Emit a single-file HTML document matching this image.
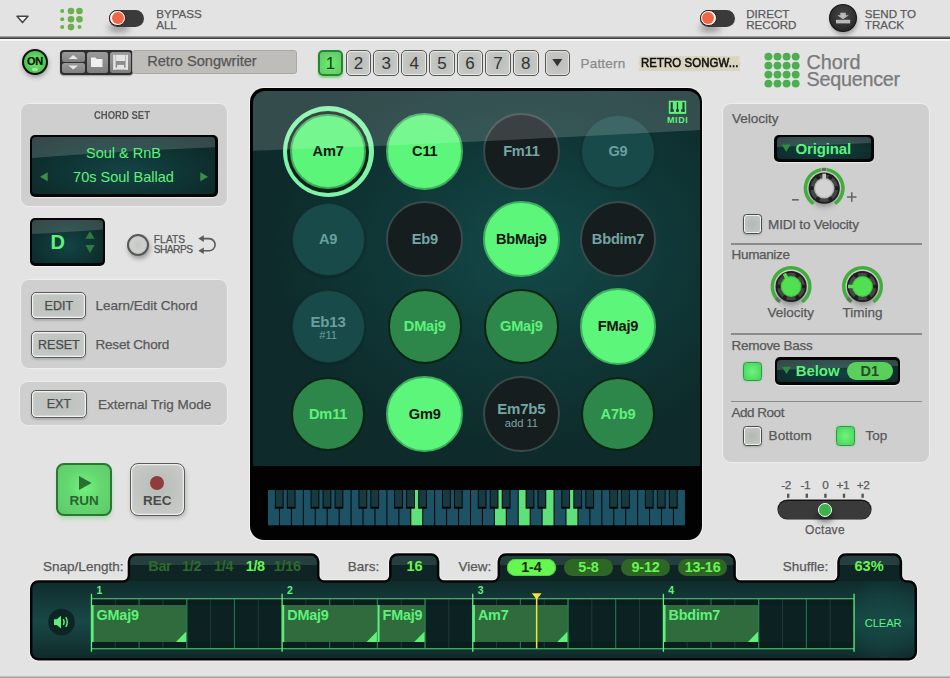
<!DOCTYPE html><html><head><meta charset="utf-8"><style>
*{margin:0;padding:0;box-sizing:border-box}
html,body{width:950px;height:678px;overflow:hidden;background:#e3e3e3;font-family:"Liberation Sans",sans-serif}
.a{position:absolute}
.t{position:absolute;line-height:1;white-space:nowrap}
.g{-webkit-text-stroke:.25px currentColor}
svg{position:absolute;left:0;top:0;overflow:visible}
</style></head><body>
<div class="a" style="left:0;top:36px;width:950px;height:3.1px;background:linear-gradient(#c4c4c4,#6a6a6a 45%,#444 80%,#4a4a4a)"></div>
<div class="a" style="left:0;top:39.1px;width:950px;height:2.2px;background:#f5f5f5"></div>
<svg width="950" height="678" viewBox="0 0 950 678"><path d="M17 16.3 L28 16.3 L22.5 22.6 Z" fill="#f4f4f4" stroke="#444" stroke-width="1.5" stroke-linejoin="round"/><circle cx="62.2" cy="11" r="2" fill="#6bb04c"/><circle cx="71" cy="11" r="3.3" fill="#6bb04c"/><circle cx="79.5" cy="11" r="3.3" fill="#6bb04c"/><circle cx="62.2" cy="19.2" r="2" fill="#6bb04c"/><circle cx="71" cy="19.2" r="3.3" fill="#6bb04c"/><circle cx="79.5" cy="19.2" r="3.3" fill="#6bb04c"/><circle cx="62.2" cy="27.1" r="2" fill="#6bb04c"/><circle cx="71" cy="27.1" r="3.3" fill="#6bb04c"/><circle cx="79.5" cy="27.1" r="2" fill="#6bb04c"/></svg>
<div class="a" style="left:108px;top:24px;width:22px;height:8px;border-radius:50%;background:rgba(0,0,0,.35);filter:blur(3px)"></div><div class="a" style="left:109px;top:9.5px;width:35px;height:17.5px;border-radius:9px;background:#3a3a3a"></div><div class="a" style="left:109.4px;top:9.7px;width:16.6px;height:16.6px;border-radius:50%;background:#fff;border:1.3px solid #3a1a10"></div><div class="a" style="left:111.7px;top:12px;width:12px;height:12px;border-radius:50%;background:#f26645"></div>
<div class="t g" style="left:156.20px;top:8.09px;font-size:11.6px;color:#5a5a5a;font-weight:normal;letter-spacing:0px">BYPASS</div>
<div class="t g" style="left:156.20px;top:19.09px;font-size:11.6px;color:#5a5a5a;font-weight:normal;letter-spacing:0px">ALL</div>
<div class="a" style="left:699px;top:24px;width:22px;height:8px;border-radius:50%;background:rgba(0,0,0,.35);filter:blur(3px)"></div><div class="a" style="left:700px;top:9.5px;width:35px;height:17.5px;border-radius:9px;background:#3a3a3a"></div><div class="a" style="left:700.0px;top:9.7px;width:16.6px;height:16.6px;border-radius:50%;background:#fff;border:1.3px solid #3a1a10"></div><div class="a" style="left:702.3px;top:12px;width:12px;height:12px;border-radius:50%;background:#f26645"></div>
<div class="t g" style="left:746.20px;top:8.09px;font-size:11.6px;color:#5a5a5a;font-weight:normal;letter-spacing:0px">DIRECT</div>
<div class="t g" style="left:746.20px;top:19.09px;font-size:11.6px;color:#5a5a5a;font-weight:normal;letter-spacing:0px">RECORD</div>
<div class="a" style="left:831px;top:9px;width:26px;height:26px;border-radius:50%;background:rgba(0,0,0,.3);filter:blur(2px)"></div>
<div class="a" style="left:829px;top:4.3px;width:28.2px;height:27.5px;border-radius:50%;background:radial-gradient(circle at 50% 40%,#4a4a4a,#2a2a2a 70%);border:1.6px solid #141414"></div>
<svg width="950" height="678"><path d="M840.3 12.8 H845.8 V15.2 H848.8 L843 19.2 L837.3 15.2 H840.3 Z" fill="#b9b9b9"/><rect x="836" y="19.8" width="14.2" height="3.6" fill="#b9b9b9"/></svg>
<div class="t g" style="left:864.80px;top:8.09px;font-size:11.6px;color:#5a5a5a;font-weight:normal;letter-spacing:0px">SEND TO</div>
<div class="t g" style="left:864.80px;top:19.09px;font-size:11.6px;color:#5a5a5a;font-weight:normal;letter-spacing:0px">TRACK</div>
<div class="a" style="left:23px;top:52px;width:25px;height:25px;border-radius:50%;background:rgba(0,0,0,.35);filter:blur(2.5px)"></div>
<div class="a" style="left:21.9px;top:48.5px;width:26.3px;height:26.2px;border-radius:50%;background:radial-gradient(circle at 50% 50%,#6ae86a,#5cd45c 45%,#4fc04f 70%,#5ccc5c);border:2.2px solid #101010"></div>
<div class="t" style="left:-115.00px;top:56.46px;width:300px;text-align:center;font-size:11px;color:#0c0c0c;font-weight:bold;letter-spacing:-.2px;-webkit-text-stroke:.2px #0c0c0c">ON</div>
<div class="a" style="left:32px;top:67.6px;width:6px;height:3px;border-radius:3px;background:rgba(255,255,255,.45)"></div>
<div class="a" style="left:60px;top:50px;width:73px;height:24.5px;border-radius:4px;background:#2e2e2e;box-shadow:0 1px 1.5px rgba(0,0,0,.3)"></div>
<div class="a" style="left:61.5px;top:51.5px;width:23.5px;height:10px;border-radius:2.5px;background:linear-gradient(#9a9a9a,#808080)"></div>
<div class="a" style="left:61.5px;top:63px;width:23.5px;height:10px;border-radius:2.5px;background:linear-gradient(#9a9a9a,#808080)"></div>
<div class="a" style="left:86.5px;top:51.5px;width:21px;height:21.5px;border-radius:2.5px;background:linear-gradient(#9a9a9a,#808080)"></div>
<div class="a" style="left:109.5px;top:51.5px;width:21.5px;height:21.5px;border-radius:2.5px;background:linear-gradient(#9a9a9a,#808080)"></div>
<svg width="950" height="678"><path d="M68.5 59 L73.2 55 L78 59 Z" fill="#e8e8e8"/><path d="M68.5 65.5 L73.2 69.5 L78 65.5 Z" fill="#e8e8e8"/><path d="M91 57.5 H95.5 L96.8 59 H102.5 V67 H91 Z" fill="#f0f0f0"/><g fill="#e4e4e4"><rect x="113.2" y="54.8" width="2.4" height="14.8"/><rect x="125.6" y="54.8" width="2.4" height="14.8"/><rect x="116.1" y="54.8" width="9" height="6.2"/><rect x="113.2" y="67.6" width="14.8" height="2"/><rect x="117.1" y="64.9" width="7" height="4"/></g></svg>
<div class="a" style="left:132px;top:49.8px;width:165.3px;height:24.5px;border-radius:3px;background:#bebdba;border:1px solid #a9a8a5"></div>
<div class="t g" style="left:147.20px;top:54.39px;font-size:14.6px;color:#555;font-weight:normal;">Retro Songwriter</div>
<div class="a" style="left:317.6px;top:50px;width:25.8px;height:25.6px;border-radius:5px;background:radial-gradient(circle at 50% 55%,#68f86a 0,#62e466 30%,#6cc870 78%);border:2px solid #1f8a30;box-shadow:0 1.5px 2px rgba(60,200,60,.55)"></div>
<div class="t" style="left:180.50px;top:55.08px;width:300px;text-align:center;font-size:17px;color:#1e3a20;font-weight:normal;">1</div>
<div class="a" style="left:345.5px;top:50px;width:25.8px;height:25.6px;border-radius:5px;background:radial-gradient(circle at 50% 50%,#b9bcb9,#c5c8c5 70%);border:1.9px solid #555;box-shadow:inset 0 0 0 1px #eaeae8"></div>
<div class="t" style="left:208.40px;top:55.08px;width:300px;text-align:center;font-size:17px;color:#333;font-weight:normal;">2</div>
<div class="a" style="left:373.4px;top:50px;width:25.8px;height:25.6px;border-radius:5px;background:radial-gradient(circle at 50% 50%,#b9bcb9,#c5c8c5 70%);border:1.9px solid #555;box-shadow:inset 0 0 0 1px #eaeae8"></div>
<div class="t" style="left:236.30px;top:55.08px;width:300px;text-align:center;font-size:17px;color:#333;font-weight:normal;">3</div>
<div class="a" style="left:401.3px;top:50px;width:25.8px;height:25.6px;border-radius:5px;background:radial-gradient(circle at 50% 50%,#b9bcb9,#c5c8c5 70%);border:1.9px solid #555;box-shadow:inset 0 0 0 1px #eaeae8"></div>
<div class="t" style="left:264.20px;top:55.08px;width:300px;text-align:center;font-size:17px;color:#333;font-weight:normal;">4</div>
<div class="a" style="left:429.2px;top:50px;width:25.8px;height:25.6px;border-radius:5px;background:radial-gradient(circle at 50% 50%,#b9bcb9,#c5c8c5 70%);border:1.9px solid #555;box-shadow:inset 0 0 0 1px #eaeae8"></div>
<div class="t" style="left:292.10px;top:55.08px;width:300px;text-align:center;font-size:17px;color:#333;font-weight:normal;">5</div>
<div class="a" style="left:457.1px;top:50px;width:25.8px;height:25.6px;border-radius:5px;background:radial-gradient(circle at 50% 50%,#b9bcb9,#c5c8c5 70%);border:1.9px solid #555;box-shadow:inset 0 0 0 1px #eaeae8"></div>
<div class="t" style="left:320.00px;top:55.08px;width:300px;text-align:center;font-size:17px;color:#333;font-weight:normal;">6</div>
<div class="a" style="left:485.0px;top:50px;width:25.8px;height:25.6px;border-radius:5px;background:radial-gradient(circle at 50% 50%,#b9bcb9,#c5c8c5 70%);border:1.9px solid #555;box-shadow:inset 0 0 0 1px #eaeae8"></div>
<div class="t" style="left:347.90px;top:55.08px;width:300px;text-align:center;font-size:17px;color:#333;font-weight:normal;">7</div>
<div class="a" style="left:512.9px;top:50px;width:25.8px;height:25.6px;border-radius:5px;background:radial-gradient(circle at 50% 50%,#b9bcb9,#c5c8c5 70%);border:1.9px solid #555;box-shadow:inset 0 0 0 1px #eaeae8"></div>
<div class="t" style="left:375.80px;top:55.08px;width:300px;text-align:center;font-size:17px;color:#333;font-weight:normal;">8</div>
<div class="a" style="left:544.5px;top:50px;width:25.6px;height:25.6px;border-radius:5px;background:radial-gradient(circle at 50% 50%,#bbbdba,#c6c7c5 70%);border:1.6px solid #585858;box-shadow:inset 0 0 0 1px #e0e0de"></div>
<svg width="950" height="678"><path d="M552.3 59 H562.3 L557.3 66.2 Z" fill="#333"/></svg>
<div class="t g" style="left:580.50px;top:57.04px;font-size:13.5px;color:#8a8a8a;font-weight:normal;letter-spacing:.2px">Pattern</div>
<svg width="950" height="678"><path d="M639 56.5 L700 56 L740 56.3 L739 60 L741 64 L739.5 67 L740.5 71 L690 71.3 L638.5 71 L639.8 67 L638.2 63 L639.5 60 Z" fill="#d9d5c1"/></svg>
<div class="t" style="left:641.20px;top:57.13px;font-size:12.8px;color:#111;font-weight:normal;transform:scaleX(.89);transform-origin:0 0;-webkit-text-stroke:.6px #111;letter-spacing:.1px">RETRO SONGW...</div>
<svg width="950" height="678"><circle cx="768.40" cy="56.60" r="3.95" fill="#4cae50"/><circle cx="777.50" cy="56.60" r="3.95" fill="#4cae50"/><circle cx="786.60" cy="56.60" r="3.95" fill="#4cae50"/><circle cx="795.70" cy="56.60" r="3.95" fill="#4cae50"/><circle cx="768.40" cy="65.60" r="3.95" fill="#4cae50"/><circle cx="777.50" cy="65.60" r="3.95" fill="#4cae50"/><circle cx="786.60" cy="65.60" r="3.95" fill="#4cae50"/><circle cx="795.70" cy="65.60" r="3.95" fill="#4cae50"/><circle cx="768.40" cy="74.60" r="3.95" fill="#4cae50"/><circle cx="777.50" cy="74.60" r="3.95" fill="#4cae50"/><circle cx="786.60" cy="74.60" r="3.95" fill="#4cae50"/><circle cx="795.70" cy="74.60" r="3.95" fill="#4cae50"/><circle cx="768.40" cy="83.60" r="3.95" fill="#4cae50"/><circle cx="777.50" cy="83.60" r="3.95" fill="#4cae50"/><circle cx="786.60" cy="83.60" r="3.95" fill="#4cae50"/><circle cx="795.70" cy="83.60" r="3.95" fill="#4cae50"/></svg>
<div class="t g" style="left:806.50px;top:52.82px;font-size:19.8px;color:#7a7a7a;font-weight:normal;">Chord</div>
<div class="t g" style="left:806.50px;top:70.22px;font-size:19.8px;color:#7a7a7a;font-weight:normal;letter-spacing:-.25px">Sequencer</div>
<div class="a" style="left:21px;top:104px;width:206px;height:101.6px;border-radius:8px;background:#cfcfcf;box-shadow:0 0 0 1px rgba(255,255,255,.35)"></div>
<div class="t" style="left:-28.40px;top:110.34px;width:300px;text-align:center;font-size:11.2px;color:#555;font-weight:bold;transform:scaleX(.85)">CHORD SET</div>
<div class="a" style="left:29.8px;top:134.8px;width:188.1px;height:62.0px;border-radius:5px;background:#050505;box-shadow:0 1px 1px rgba(255,255,255,.6)"></div><div class="a" style="left:32.2px;top:137.20000000000002px;width:183.3px;height:57.2px;border-radius:3.5px;overflow:hidden;background:radial-gradient(ellipse at 50% 60%,#134444,#0f3232 55%,#0f2424)"><svg width="188.1" height="62.0" style="position:absolute;left:0;top:0"><path d="M0 0 H190 V10 Q90 14 0 21 Z" fill="rgba(255,255,255,.16)"/></svg></div>
<div class="t" style="left:-26.50px;top:146.11px;width:300px;text-align:center;font-size:14.5px;color:#5ef27a;font-weight:normal;">Soul &amp; RnB</div>
<div class="t" style="left:-26.50px;top:169.61px;width:300px;text-align:center;font-size:14.5px;color:#5ef27a;font-weight:normal;">70s Soul Ballad</div>
<svg width="950" height="678"><path d="M40 176.8 L47.7 172.3 V181.3 Z" fill="#3b8f48"/><path d="M208 176.8 L200.3 172.3 V181.3 Z" fill="#3b8f48"/></svg>
<div class="a" style="left:30px;top:217.6px;width:75.3px;height:48.2px;border-radius:5px;background:#050505;box-shadow:0 1px 1px rgba(255,255,255,.6)"></div><div class="a" style="left:32.4px;top:220.0px;width:70.5px;height:43.4px;border-radius:3.5px;overflow:hidden;background:radial-gradient(ellipse at 50% 60%,#134444,#0f3232 55%,#0f2424)"><svg width="75.3" height="48.20000000000002" style="position:absolute;left:0;top:0"><path d="M0 0 H72 V9.5 Q40 12 0 14 Z" fill="rgba(255,255,255,.16)"/></svg></div>
<div class="t" style="left:-92.40px;top:231.69px;width:300px;text-align:center;font-size:20px;color:#5ef27a;font-weight:bold;">D</div>
<svg width="950" height="678"><path d="M85.3 238.7 L90 231.3 L94.7 238.7 Z" fill="#2c7c3c"/><path d="M85.3 245 L90 252.9 L94.7 245 Z" fill="#2c7c3c"/></svg>
<div class="a" style="left:127.5px;top:237px;width:22px;height:22px;border-radius:50%;background:rgba(0,0,0,.3);filter:blur(2px)"></div>
<div class="a" style="left:126.6px;top:233.9px;width:22.2px;height:22.2px;border-radius:50%;background:radial-gradient(circle,#c2c8c3,#cdd0cd 45%,#c3c6c3);border:2px solid #575757"></div>
<div class="t g" style="left:153.80px;top:235.07px;font-size:10.2px;color:#555;font-weight:normal;letter-spacing:.1px">FLATS</div>
<div class="t g" style="left:153.80px;top:245.47px;font-size:10.2px;color:#555;font-weight:normal;letter-spacing:-.55px">SHARPS</div>
<svg width="950" height="678"><path d="M203 238.6 H209 A6.1 6.1 0 0 1 209 250.8 H203" fill="none" stroke="#5a5a5a" stroke-width="1.6"/><path d="M198.3 238.6 L203.8 235.3 V241.9 Z" fill="#5a5a5a"/><path d="M198.3 250.8 L203.8 247.5 V254.1 Z" fill="#5a5a5a"/></svg>
<div class="a" style="left:20.6px;top:280.2px;width:206.4px;height:88.3px;border-radius:8px;background:#cfcfcf;box-shadow:0 0 0 1px rgba(255,255,255,.35)"></div>
<div class="a" style="left:31.2px;top:292.4px;width:55.3px;height:26.8px;border-radius:5px;background:radial-gradient(ellipse at 50% 50%,#bcc0bc,#c4c8c4 70%);border:1.5px solid #5a5a5a;box-shadow:inset 0 0 0 1.2px #f2f2f2,0 1.5px 2px rgba(0,0,0,.15)"></div><div class="t g" style="left:-91.15px;top:299.89px;width:300px;text-align:center;font-size:12.5px;color:#4a4a4a;font-weight:normal;">EDIT</div>
<div class="a" style="left:31.2px;top:331px;width:55.3px;height:27.3px;border-radius:5px;background:radial-gradient(ellipse at 50% 50%,#bcc0bc,#c4c8c4 70%);border:1.5px solid #5a5a5a;box-shadow:inset 0 0 0 1.2px #f2f2f2,0 1.5px 2px rgba(0,0,0,.15)"></div><div class="t g" style="left:-91.15px;top:338.74px;width:300px;text-align:center;font-size:12.5px;color:#4a4a4a;font-weight:normal;">RESET</div>
<div class="t g" style="left:95.50px;top:299.24px;font-size:13.5px;color:#585858;font-weight:normal;">Learn/Edit Chord</div>
<div class="t g" style="left:95.50px;top:338.04px;font-size:13.5px;color:#585858;font-weight:normal;letter-spacing:-.2px">Reset Chord</div>
<div class="a" style="left:20.2px;top:382px;width:206.8px;height:42.8px;border-radius:8px;background:#cfcfcf;box-shadow:0 0 0 1px rgba(255,255,255,.35)"></div>
<div class="a" style="left:31.1px;top:390.4px;width:55.5px;height:27.3px;border-radius:5px;background:radial-gradient(ellipse at 50% 50%,#bcc0bc,#c4c8c4 70%);border:1.5px solid #5a5a5a;box-shadow:inset 0 0 0 1.2px #f2f2f2,0 1.5px 2px rgba(0,0,0,.15)"></div><div class="t g" style="left:-91.15px;top:398.14px;width:300px;text-align:center;font-size:12.5px;color:#4a4a4a;font-weight:normal;">EXT</div>
<div class="t g" style="left:98.00px;top:397.64px;font-size:13.5px;color:#585858;font-weight:normal;">External Trig Mode</div>
<div class="a" style="left:57px;top:468px;width:55px;height:51px;border-radius:8px;background:rgba(80,200,90,.35);filter:blur(2px)"></div>
<div class="a" style="left:56.4px;top:463.2px;width:55.3px;height:52.6px;border-radius:8px;background:radial-gradient(circle at 50% 45%,#72f47e,#64d870 45%,#5ec86a);border:2.2px solid #2b7632"></div>
<svg width="950" height="678"><path d="M79 476 L91.6 483 L79 490 Z" fill="#2a6e32"/></svg>
<div class="t" style="left:-65.90px;top:494.04px;width:300px;text-align:center;font-size:13.5px;color:#2a6430;font-weight:bold;">RUN</div>
<div class="a" style="left:131px;top:467px;width:55px;height:51px;border-radius:8px;background:rgba(0,0,0,.2);filter:blur(2px)"></div>
<div class="a" style="left:129.5px;top:463.2px;width:55.3px;height:52.6px;border-radius:8px;background:radial-gradient(circle at 50% 45%,#b8bcb8,#c3c6c3 60%,#cacdca);border:1.8px solid #5a5a5a;box-shadow:inset 0 0 0 1.3px #eee"></div>
<div class="a" style="left:150.1px;top:476px;width:14.2px;height:14.2px;border-radius:50%;background:#8e3c3e"></div>
<div class="t" style="left:7.20px;top:494.04px;width:300px;text-align:center;font-size:13.5px;color:#4a4a4a;font-weight:bold;">REC</div>
<div class="a" style="left:250px;top:87.6px;width:452px;height:452px;border-radius:14px;background:#020202;box-shadow:0 0 0 1px rgba(255,255,255,.5)"></div>
<div class="a" style="left:252.5px;top:90.5px;width:447px;height:375.2px;border-radius:12px 12px 0 0;overflow:hidden;background:radial-gradient(ellipse 60% 55% at 62% 42%,#144a4a,#103838 50%,#0e2a2a 100%)"></div>
<div class="a" style="left:282.60px;top:106.10px;width:91.00px;height:91.00px;border-radius:50%;background:#80f3aa;"></div>
<div class="a" style="left:287.10px;top:110.60px;width:82.00px;height:82.00px;border-radius:50%;background:#0f2418;"></div>
<div class="a" style="left:290.20px;top:113.70px;width:75.80px;height:75.80px;border-radius:50%;background:#5bf57a;border:2.0px solid #3faa5c;"></div>
<div class="t" style="left:178.10px;top:144.49px;width:300px;text-align:center;font-size:14.6px;color:#141414;font-weight:bold;letter-spacing:-.2px">Am7</div>
<div class="a" style="left:386.40px;top:113.20px;width:76.80px;height:76.80px;border-radius:50%;background:#5cf67b;border:2.8px solid #3fae5e;"></div>
<div class="t" style="left:274.80px;top:144.49px;width:300px;text-align:center;font-size:14.6px;color:#141414;font-weight:bold;letter-spacing:-.2px">C11</div>
<div class="a" style="left:483.00px;top:113.20px;width:76.80px;height:76.80px;border-radius:50%;background:#161d1e;border:2.2px solid #384a49;"></div>
<div class="t" style="left:371.40px;top:144.49px;width:300px;text-align:center;font-size:14.6px;color:#74a6a4;font-weight:bold;letter-spacing:-.2px">Fm11</div>
<div class="a" style="left:581.40px;top:115.00px;width:73.20px;height:73.20px;border-radius:50%;background:#174a49;border:1.5px solid #123434;box-shadow:0 1px 3px rgba(0,0,0,.25)"></div>
<div class="t" style="left:468.00px;top:144.49px;width:300px;text-align:center;font-size:14.6px;color:#6a9f9f;font-weight:bold;letter-spacing:-.2px">G9</div>
<div class="a" style="left:291.50px;top:202.50px;width:73.20px;height:73.20px;border-radius:50%;background:#174a49;border:1.5px solid #123434;box-shadow:0 1px 3px rgba(0,0,0,.25)"></div>
<div class="t" style="left:178.10px;top:231.99px;width:300px;text-align:center;font-size:14.6px;color:#6a9f9f;font-weight:bold;letter-spacing:-.2px">A9</div>
<div class="a" style="left:386.40px;top:200.70px;width:76.80px;height:76.80px;border-radius:50%;background:#161d1e;border:2.2px solid #384a49;"></div>
<div class="t" style="left:274.80px;top:231.99px;width:300px;text-align:center;font-size:14.6px;color:#74a6a4;font-weight:bold;letter-spacing:-.2px">Eb9</div>
<div class="a" style="left:483.00px;top:200.70px;width:76.80px;height:76.80px;border-radius:50%;background:#5cf67b;border:2.8px solid #3fae5e;"></div>
<div class="t" style="left:371.40px;top:231.99px;width:300px;text-align:center;font-size:14.6px;color:#141414;font-weight:bold;letter-spacing:-.2px">BbMaj9</div>
<div class="a" style="left:579.60px;top:200.70px;width:76.80px;height:76.80px;border-radius:50%;background:#161d1e;border:2.2px solid #384a49;"></div>
<div class="t" style="left:468.00px;top:231.99px;width:300px;text-align:center;font-size:14.6px;color:#74a6a4;font-weight:bold;letter-spacing:-.2px">Bbdim7</div>
<div class="a" style="left:291.50px;top:290.00px;width:73.20px;height:73.20px;border-radius:50%;background:#174a49;border:1.5px solid #123434;box-shadow:0 1px 3px rgba(0,0,0,.25)"></div>
<div class="t" style="left:178.10px;top:314.04px;width:300px;text-align:center;font-size:15px;color:#6a9f9f;font-weight:bold;letter-spacing:-.2px">Eb13</div>
<div class="t" style="left:178.10px;top:330.14px;width:300px;text-align:center;font-size:11.2px;color:#6a9f9f;font-weight:normal;">#11</div>
<div class="a" style="left:387.60px;top:289.40px;width:74.40px;height:74.40px;border-radius:50%;background:#2e874a;border:2.8px solid #0a2412;"></div>
<div class="t" style="left:274.80px;top:319.49px;width:300px;text-align:center;font-size:14.6px;color:#5ef27a;font-weight:bold;letter-spacing:-.2px">DMaj9</div>
<div class="a" style="left:484.20px;top:289.40px;width:74.40px;height:74.40px;border-radius:50%;background:#2e874a;border:2.8px solid #0a2412;"></div>
<div class="t" style="left:371.40px;top:319.49px;width:300px;text-align:center;font-size:14.6px;color:#5ef27a;font-weight:bold;letter-spacing:-.2px">GMaj9</div>
<div class="a" style="left:579.60px;top:288.20px;width:76.80px;height:76.80px;border-radius:50%;background:#5cf67b;border:2.8px solid #3fae5e;"></div>
<div class="t" style="left:468.00px;top:319.49px;width:300px;text-align:center;font-size:14.6px;color:#141414;font-weight:bold;letter-spacing:-.2px">FMaj9</div>
<div class="a" style="left:290.90px;top:376.80px;width:74.40px;height:74.40px;border-radius:50%;background:#2e874a;border:2.8px solid #0a2412;"></div>
<div class="t" style="left:178.10px;top:406.89px;width:300px;text-align:center;font-size:14.6px;color:#5ef27a;font-weight:bold;letter-spacing:-.2px">Dm11</div>
<div class="a" style="left:386.40px;top:375.60px;width:76.80px;height:76.80px;border-radius:50%;background:#5cf67b;border:2.8px solid #3fae5e;"></div>
<div class="t" style="left:274.80px;top:406.89px;width:300px;text-align:center;font-size:14.6px;color:#141414;font-weight:bold;letter-spacing:-.2px">Gm9</div>
<div class="a" style="left:483.00px;top:375.60px;width:76.80px;height:76.80px;border-radius:50%;background:#161d1e;border:2.2px solid #384a49;"></div>
<div class="t" style="left:371.40px;top:401.44px;width:300px;text-align:center;font-size:15px;color:#74a6a4;font-weight:bold;letter-spacing:-.2px">Em7b5</div>
<div class="t" style="left:371.40px;top:417.54px;width:300px;text-align:center;font-size:11.2px;color:#74a6a4;font-weight:normal;">add 11</div>
<div class="a" style="left:580.80px;top:376.80px;width:74.40px;height:74.40px;border-radius:50%;background:#2e874a;border:2.8px solid #0a2412;"></div>
<div class="t" style="left:468.00px;top:406.89px;width:300px;text-align:center;font-size:14.6px;color:#5ef27a;font-weight:bold;letter-spacing:-.2px">A7b9</div>
<div class="a" style="left:252.5px;top:90.5px;width:447px;height:120px;border-radius:12px 12px 0 0;overflow:hidden"><svg width="447" height="120" style="position:absolute;left:0;top:0"><path d="M0 0 H447 V39.1 Q223.5 51.6 0 59.8 Z" fill="rgba(255,255,255,.16)"/></svg></div>
<svg width="950" height="678"><rect x="668.8" y="100.7" width="17.4" height="13.2" fill="#5ef27a"/><rect x="670.6" y="102.2" width="2.20" height="9.6" fill="#2e3c40"/><rect x="670.6" y="109.3" width="3.30" height="2.5" fill="#2e3c40"/><rect x="676.8" y="102.2" width="1.30" height="9.6" fill="#2e3c40"/><rect x="676.0" y="109.3" width="2.90" height="2.5" fill="#2e3c40"/><rect x="682.4" y="102.2" width="2.20" height="9.6" fill="#2e3c40"/><rect x="681.1" y="109.3" width="3.50" height="2.5" fill="#2e3c40"/></svg>
<div class="t" style="left:527.70px;top:115.93px;width:300px;text-align:center;font-size:9px;color:#5ef27a;font-weight:bold;letter-spacing:.6px">MIDI</div>
<svg width="950" height="678"><rect x="268.00" y="490.0" width="10.94" height="35.30" fill="#1d5264"/><rect x="279.94" y="490.0" width="10.94" height="35.30" fill="#1d5264"/><rect x="291.88" y="490.0" width="10.94" height="35.30" fill="#1d5264"/><rect x="303.82" y="490.0" width="10.94" height="35.30" fill="#1d5264"/><rect x="315.76" y="490.0" width="10.94" height="35.30" fill="#1d5264"/><rect x="327.70" y="490.0" width="10.94" height="35.30" fill="#1d5264"/><rect x="339.64" y="490.0" width="10.94" height="35.30" fill="#1d5264"/><rect x="351.58" y="490.0" width="10.94" height="35.30" fill="#1d5264"/><rect x="363.52" y="490.0" width="10.94" height="35.30" fill="#1d5264"/><rect x="375.46" y="490.0" width="10.94" height="35.30" fill="#1d5264"/><rect x="387.40" y="490.0" width="10.94" height="35.30" fill="#1d5264"/><rect x="399.34" y="490.0" width="10.94" height="35.30" fill="#1d5264"/><rect x="411.28" y="490.0" width="10.94" height="35.30" fill="#5ee07a"/><rect x="423.22" y="490.0" width="10.94" height="35.30" fill="#1d5264"/><rect x="435.16" y="490.0" width="10.94" height="35.30" fill="#1d5264"/><rect x="447.10" y="490.0" width="10.94" height="35.30" fill="#1d5264"/><rect x="459.04" y="490.0" width="10.94" height="35.30" fill="#1d5264"/><rect x="470.98" y="490.0" width="10.94" height="35.30" fill="#1d5264"/><rect x="482.92" y="490.0" width="10.94" height="35.30" fill="#1d5264"/><rect x="494.86" y="490.0" width="10.94" height="35.30" fill="#5ee07a"/><rect x="506.80" y="490.0" width="10.94" height="35.30" fill="#1d5264"/><rect x="518.74" y="490.0" width="10.94" height="35.30" fill="#5ee07a"/><rect x="530.68" y="490.0" width="10.94" height="35.30" fill="#1d5264"/><rect x="542.62" y="490.0" width="10.94" height="35.30" fill="#5ee07a"/><rect x="554.56" y="490.0" width="10.94" height="35.30" fill="#1d5264"/><rect x="566.50" y="490.0" width="10.94" height="35.30" fill="#5ee07a"/><rect x="578.44" y="490.0" width="10.94" height="35.30" fill="#1d5264"/><rect x="590.38" y="490.0" width="10.94" height="35.30" fill="#1d5264"/><rect x="602.32" y="490.0" width="10.94" height="35.30" fill="#1d5264"/><rect x="614.26" y="490.0" width="10.94" height="35.30" fill="#1d5264"/><rect x="626.20" y="490.0" width="10.94" height="35.30" fill="#1d5264"/><rect x="638.14" y="490.0" width="10.94" height="35.30" fill="#1d5264"/><rect x="650.08" y="490.0" width="10.94" height="35.30" fill="#1d5264"/><rect x="662.02" y="490.0" width="10.94" height="35.30" fill="#1d5264"/><rect x="673.96" y="490.0" width="10.94" height="35.30" fill="#1d5264"/><rect x="274.90" y="490.0" width="8.70" height="18.70" fill="#020202"/><rect x="275.80" y="490.0" width="6.9" height="16.8" fill="#173a40"/><rect x="286.80" y="490.0" width="8.70" height="18.70" fill="#020202"/><rect x="287.70" y="490.0" width="6.9" height="16.8" fill="#173a40"/><rect x="310.60" y="490.0" width="8.70" height="18.70" fill="#020202"/><rect x="311.50" y="490.0" width="6.9" height="16.8" fill="#173a40"/><rect x="322.60" y="490.0" width="8.70" height="18.70" fill="#020202"/><rect x="323.50" y="490.0" width="6.9" height="16.8" fill="#173a40"/><rect x="334.60" y="490.0" width="8.70" height="18.70" fill="#020202"/><rect x="335.50" y="490.0" width="6.9" height="16.8" fill="#173a40"/><rect x="358.48" y="490.0" width="8.70" height="18.70" fill="#020202"/><rect x="359.38" y="490.0" width="6.9" height="16.8" fill="#173a40"/><rect x="370.38" y="490.0" width="8.70" height="18.70" fill="#020202"/><rect x="371.28" y="490.0" width="6.9" height="16.8" fill="#173a40"/><rect x="394.18" y="490.0" width="8.70" height="18.70" fill="#020202"/><rect x="395.08" y="490.0" width="6.9" height="16.8" fill="#173a40"/><rect x="406.18" y="490.0" width="8.70" height="18.70" fill="#020202"/><rect x="407.08" y="490.0" width="6.9" height="16.8" fill="#173a40"/><rect x="418.18" y="490.0" width="8.70" height="18.70" fill="#020202"/><rect x="419.08" y="490.0" width="6.9" height="16.8" fill="#173a40"/><rect x="442.06" y="490.0" width="8.70" height="18.70" fill="#020202"/><rect x="442.96" y="490.0" width="6.9" height="16.8" fill="#173a40"/><rect x="453.96" y="490.0" width="8.70" height="18.70" fill="#020202"/><rect x="454.86" y="490.0" width="6.9" height="16.8" fill="#173a40"/><rect x="477.76" y="490.0" width="8.70" height="18.70" fill="#020202"/><rect x="478.66" y="490.0" width="6.9" height="16.8" fill="#173a40"/><rect x="489.76" y="490.0" width="8.70" height="18.70" fill="#020202"/><rect x="490.66" y="490.0" width="6.9" height="16.8" fill="#173a40"/><rect x="501.76" y="490.0" width="8.70" height="18.70" fill="#020202"/><rect x="502.66" y="490.0" width="6.9" height="16.8" fill="#173a40"/><rect x="525.64" y="490.0" width="8.70" height="18.70" fill="#020202"/><rect x="526.54" y="490.0" width="6.9" height="16.8" fill="#173a40"/><rect x="537.54" y="490.0" width="8.70" height="18.70" fill="#020202"/><rect x="538.44" y="490.0" width="6.9" height="16.8" fill="#173a40"/><rect x="561.34" y="490.0" width="8.70" height="18.70" fill="#020202"/><rect x="562.24" y="490.0" width="6.9" height="16.8" fill="#173a40"/><rect x="573.34" y="490.0" width="8.70" height="18.70" fill="#020202"/><rect x="574.24" y="490.0" width="6.9" height="16.8" fill="#173a40"/><rect x="585.34" y="490.0" width="8.70" height="18.70" fill="#020202"/><rect x="586.24" y="490.0" width="6.9" height="16.8" fill="#173a40"/><rect x="609.22" y="490.0" width="8.70" height="18.70" fill="#020202"/><rect x="610.12" y="490.0" width="6.9" height="16.8" fill="#173a40"/><rect x="621.12" y="490.0" width="8.70" height="18.70" fill="#020202"/><rect x="622.02" y="490.0" width="6.9" height="16.8" fill="#173a40"/><rect x="644.92" y="490.0" width="8.70" height="18.70" fill="#020202"/><rect x="645.82" y="490.0" width="6.9" height="16.8" fill="#173a40"/><rect x="656.92" y="490.0" width="8.70" height="18.70" fill="#020202"/><rect x="657.82" y="490.0" width="6.9" height="16.8" fill="#173a40"/><rect x="668.92" y="490.0" width="8.70" height="18.70" fill="#020202"/><rect x="669.82" y="490.0" width="6.9" height="16.8" fill="#173a40"/></svg>
<div class="a" style="left:723.2px;top:104.1px;width:206.2px;height:358.4px;border-radius:8px;background:#cfcfcf;box-shadow:0 0 0 1px rgba(255,255,255,.35)"></div>
<div class="t g" style="left:732.00px;top:112.44px;font-size:13.5px;color:#585858;font-weight:normal;">Velocity</div>
<div class="a" style="left:774.2px;top:134.5px;width:99.6px;height:27.4px;border-radius:5px;background:#050505;box-shadow:0 1px 1px rgba(255,255,255,.6)"></div><div class="a" style="left:776.6px;top:136.9px;width:94.8px;height:22.6px;border-radius:3.5px;overflow:hidden;background:radial-gradient(ellipse at 50% 60%,#134444,#0f3232 55%,#0f2424)"><svg width="99.59999999999991" height="27.400000000000006" style="position:absolute;left:0;top:0"><path d="M0 0 H96 V6 Q50 8 0 10 Z" fill="rgba(255,255,255,.16)"/></svg></div>
<svg width="950" height="678"><path d="M781.7 144.5 H790.8 L786.2 151.8 Z" fill="#2f8a42"/></svg>
<div class="t" style="left:795.60px;top:140.74px;font-size:15px;color:#5ef27a;font-weight:bold;letter-spacing:-.15px">Original</div>
<div class="a" style="left:810.2px;top:178.2px;width:28px;height:28px;border-radius:50%;background:rgba(0,0,0,.35);filter:blur(3px)"></div><svg width="950" height="678"><path d="M813.42 203.60 A18.8 18.8 0 0 1 821.58 169.58" fill="none" stroke="#3fae3a" stroke-width="3.4"/><path d="M826.82 169.58 A18.8 18.8 0 0 1 834.98 203.60" fill="none" stroke="#3fae3a" stroke-width="3.4"/><path d="M824.20 171.00 L824.20 167.80" stroke="#6a6a6a" stroke-width="4.5"/><circle cx="824.2" cy="188.2" r="15.6" fill="#1e1e1e"/><circle cx="824.2" cy="188.2" r="13.8" fill="#464646"/><circle cx="830.45" cy="177.37" r="2.1" fill="#1e1e1e"/><circle cx="836.70" cy="188.20" r="2.1" fill="#1e1e1e"/><circle cx="830.45" cy="199.03" r="2.1" fill="#1e1e1e"/><circle cx="817.95" cy="199.03" r="2.1" fill="#1e1e1e"/><circle cx="811.70" cy="188.20" r="2.1" fill="#1e1e1e"/><circle cx="817.95" cy="177.37" r="2.1" fill="#1e1e1e"/><circle cx="824.2" cy="188.2" r="10.2" fill="#b8b8b8"/><circle cx="824.2" cy="188.2" r="8.8" fill="#d3d3d3"/><path d="M824.20 180.20 L824.20 173.70" stroke="#c8c8c8" stroke-width="3.6"/></svg>
<svg width="950" height="678"><rect x="792" y="199" width="6.8" height="1.6" fill="#666"/><path d="M847 197 H856.5 M851.75 192.2 V201.8" stroke="#666" stroke-width="1.6"/></svg>
<div class="a" style="left:742.7px;top:214.3px;width:19.6px;height:19.5px;border-radius:3.5px;background:radial-gradient(circle,#b3b8b3,#c0c4c0 70%,#c8ccc8);border:1.9px solid #4a4a4a;box-shadow:inset 0 0 0 1px #f0f0f0,0 1px 2px rgba(0,0,0,.2)"></div>
<div class="t g" style="left:768.10px;top:217.64px;font-size:13.5px;color:#585858;font-weight:normal;letter-spacing:-.2px">MIDI to Velocity</div>
<div class="a" style="left:730.5px;top:243.2px;width:191.4px;height:1.4px;background:#8a8a8a"></div>
<div class="t g" style="left:731.60px;top:248.14px;font-size:13.5px;color:#585858;font-weight:normal;letter-spacing:-.35px">Humanize</div>
<div class="a" style="left:777.1px;top:276.5px;width:28px;height:28px;border-radius:50%;background:rgba(0,0,0,.35);filter:blur(3px)"></div><svg width="950" height="678"><path d="M780.32 301.90 A18.8 18.8 0 1 1 801.88 301.90" fill="none" stroke="#3fae3a" stroke-width="3.4"/><path d="M778.94 298.66 L776.68 300.92" stroke="#6a6a6a" stroke-width="4.5"/><circle cx="791.1" cy="286.5" r="15.6" fill="#1e1e1e"/><circle cx="791.1" cy="286.5" r="13.8" fill="#464646"/><circle cx="797.35" cy="275.67" r="2.1" fill="#1e1e1e"/><circle cx="803.60" cy="286.50" r="2.1" fill="#1e1e1e"/><circle cx="797.35" cy="297.33" r="2.1" fill="#1e1e1e"/><circle cx="784.85" cy="297.33" r="2.1" fill="#1e1e1e"/><circle cx="778.60" cy="286.50" r="2.1" fill="#1e1e1e"/><circle cx="784.85" cy="275.67" r="2.1" fill="#1e1e1e"/><circle cx="791.1" cy="286.5" r="10.4" fill="#3ccc3c"/><circle cx="791.1" cy="286.5" r="9.2" fill="#52e052"/><path d="M787.34 279.44 L784.29 273.70" stroke="#52e052" stroke-width="3.6"/></svg>
<div class="a" style="left:848.5px;top:276.5px;width:28px;height:28px;border-radius:50%;background:rgba(0,0,0,.35);filter:blur(3px)"></div><svg width="950" height="678"><path d="M851.72 301.90 A18.8 18.8 0 1 1 873.28 301.90" fill="none" stroke="#3fae3a" stroke-width="3.4"/><path d="M850.34 298.66 L848.08 300.92" stroke="#6a6a6a" stroke-width="4.5"/><circle cx="862.5" cy="286.5" r="15.6" fill="#1e1e1e"/><circle cx="862.5" cy="286.5" r="13.8" fill="#464646"/><circle cx="868.75" cy="275.67" r="2.1" fill="#1e1e1e"/><circle cx="875.00" cy="286.50" r="2.1" fill="#1e1e1e"/><circle cx="868.75" cy="297.33" r="2.1" fill="#1e1e1e"/><circle cx="856.25" cy="297.33" r="2.1" fill="#1e1e1e"/><circle cx="850.00" cy="286.50" r="2.1" fill="#1e1e1e"/><circle cx="856.25" cy="275.67" r="2.1" fill="#1e1e1e"/><circle cx="862.5" cy="286.5" r="10.4" fill="#3ccc3c"/><circle cx="862.5" cy="286.5" r="9.2" fill="#52e052"/><path d="M854.50 286.50 L848.00 286.50" stroke="#52e052" stroke-width="3.6"/></svg>
<div class="t g" style="left:640.80px;top:306.14px;width:300px;text-align:center;font-size:13.5px;color:#585858;font-weight:normal;">Velocity</div>
<div class="t g" style="left:712.50px;top:306.14px;width:300px;text-align:center;font-size:13.5px;color:#585858;font-weight:normal;">Timing</div>
<div class="a" style="left:730.5px;top:333.2px;width:191.4px;height:1.4px;background:#8a8a8a"></div>
<div class="t g" style="left:731.60px;top:338.74px;font-size:13.5px;color:#585858;font-weight:normal;letter-spacing:-.3px">Remove Bass</div>
<div class="a" style="left:742.7px;top:361.5px;width:19.8px;height:19.4px;border-radius:3.5px;background:radial-gradient(circle,#6ef57e,#52dc66 70%,#48cf5c);border:1.5px solid #2f9c42;box-shadow:0 0 2px rgba(60,200,80,.6)"></div>
<div class="a" style="left:774.8px;top:357.1px;width:125.6px;height:27.6px;border-radius:5px;background:#050505;box-shadow:0 1px 1px rgba(255,255,255,.6)"></div><div class="a" style="left:777.1999999999999px;top:359.5px;width:120.8px;height:22.8px;border-radius:3.5px;overflow:hidden;background:radial-gradient(ellipse at 50% 60%,#134444,#0f3232 55%,#0f2424)"><svg width="125.60000000000002" height="27.599999999999966" style="position:absolute;left:0;top:0"><path d="M0 0 H122 V6 Q60 8 0 10 Z" fill="rgba(255,255,255,.16)"/></svg></div>
<svg width="950" height="678"><path d="M782 366.8 H791 L786.5 374 Z" fill="#2f8a42"/></svg>
<div class="t" style="left:795.80px;top:363.44px;font-size:15px;color:#5ef27a;font-weight:bold;letter-spacing:-.1px">Below</div>
<div class="a" style="left:846.7px;top:362.2px;width:46.4px;height:17.7px;border-radius:9px;background:#5acf5c"></div>
<div class="t" style="left:719.90px;top:363.51px;width:300px;text-align:center;font-size:14.5px;color:#2b4a2c;font-weight:bold;">D1</div>
<div class="a" style="left:730.5px;top:401px;width:191.4px;height:1.4px;background:#8a8a8a"></div>
<div class="t g" style="left:731.60px;top:406.04px;font-size:13.5px;color:#585858;font-weight:normal;letter-spacing:-.5px">Add Root</div>
<div class="a" style="left:742.7px;top:426.4px;width:19.6px;height:19.5px;border-radius:3.5px;background:radial-gradient(circle,#b3b8b3,#c0c4c0 70%,#c8ccc8);border:1.9px solid #4a4a4a;box-shadow:inset 0 0 0 1px #f0f0f0,0 1px 2px rgba(0,0,0,.2)"></div>
<div class="t g" style="left:768.60px;top:429.04px;font-size:13.5px;color:#585858;font-weight:normal;letter-spacing:.1px">Bottom</div>
<div class="a" style="left:835.6px;top:426.4px;width:19.8px;height:19.4px;border-radius:3.5px;background:radial-gradient(circle,#6ef57e,#52dc66 70%,#48cf5c);border:1.5px solid #2f9c42;box-shadow:0 0 2px rgba(60,200,80,.6)"></div>
<div class="t g" style="left:865.50px;top:429.04px;font-size:13.5px;color:#585858;font-weight:normal;">Top</div>
<div class="t g" style="left:636.20px;top:479.86px;width:300px;text-align:center;font-size:11.8px;color:#5a5a5a;font-weight:normal;letter-spacing:-.4px">-2</div>
<div class="t g" style="left:655.30px;top:479.86px;width:300px;text-align:center;font-size:11.8px;color:#5a5a5a;font-weight:normal;letter-spacing:-.4px">-1</div>
<div class="t g" style="left:675.30px;top:479.86px;width:300px;text-align:center;font-size:11.8px;color:#5a5a5a;font-weight:normal;letter-spacing:-.4px">0</div>
<div class="t g" style="left:692.90px;top:479.86px;width:300px;text-align:center;font-size:11.8px;color:#5a5a5a;font-weight:normal;letter-spacing:-.4px">+1</div>
<div class="t g" style="left:713.20px;top:479.86px;width:300px;text-align:center;font-size:11.8px;color:#5a5a5a;font-weight:normal;letter-spacing:-.4px">+2</div>
<svg width="950" height="678"><rect x="787.0" y="493.7" width="2.4" height="4.1" fill="#555"/><rect x="805.6" y="493.7" width="2.4" height="4.1" fill="#555"/><rect x="824.2" y="493.7" width="2.4" height="4.1" fill="#555"/><rect x="842.8" y="493.7" width="2.4" height="4.1" fill="#555"/><rect x="861.4" y="493.7" width="2.4" height="4.1" fill="#555"/></svg>
<div class="a" style="left:778.3px;top:499.9px;width:93px;height:19.3px;border-radius:10px;background:#3a3a3a;border-top:1.6px solid #111;box-shadow:0 0 0 .6px #222"></div>
<div class="a" style="left:817px;top:512px;width:16px;height:10px;border-radius:50%;background:rgba(0,0,0,.5);filter:blur(3px)"></div>
<div class="a" style="left:818px;top:502.6px;width:14px;height:14px;border-radius:50%;background:#3cb04a;border:1.8px solid #fff"></div>
<div class="t g" style="left:675.00px;top:524.03px;width:300px;text-align:center;font-size:12px;color:#5a5a5a;font-weight:normal;letter-spacing:.3px">Octave</div>
<svg width="950" height="678"><defs><clipPath id="seqclip"><path d="M31.2 588.6 A7 7 0 0 1 38.2 581.6 L122.9 581.6 A6 6 0 0 0 128.9 575.6 L128.9 561.6 A7 7 0 0 1 135.9 554.6 L311.2 554.6 A7 7 0 0 1 318.2 561.6 L318.2 575.6 A6 6 0 0 0 324.2 581.6 L384.3 581.6 A6 6 0 0 0 390.3 575.6 L390.3 561.6 A7 7 0 0 1 397.3 554.6 L431.1 554.6 A7 7 0 0 1 438.1 561.6 L438.1 575.6 A6 6 0 0 0 444.1 581.6 L492.8 581.6 A6 6 0 0 0 498.8 575.6 L498.8 561.6 A7 7 0 0 1 505.8 554.6 L727.5999999999999 554.6 A7 7 0 0 1 734.5999999999999 561.6 L734.5999999999999 575.6 A6 6 0 0 0 740.5999999999999 581.6 L832.5 581.6 A6 6 0 0 0 838.5 575.6 L838.5 561.6 A7 7 0 0 1 845.5 554.6 L893.9 554.6 A7 7 0 0 1 900.9 561.6 L900.9 575.6 A6 6 0 0 0 906.9 581.6 L908.8 581.6 A7 7 0 0 1 915.8 588.6 L915.8 652.2 A7 7 0 0 1 908.8 659.2 L38.2 659.2 A7 7 0 0 1 31.2 652.2 Z"/></clipPath><linearGradient id="spk" x1="0" y1="0" x2="0" y2="1"><stop offset="0" stop-color="#0f2b2b"/><stop offset=".5" stop-color="#184846"/><stop offset="1" stop-color="#0e2828"/></linearGradient><radialGradient id="rgt" cx=".45" cy=".5" r=".6"><stop offset="0" stop-color="#174a48" stop-opacity=".8"/><stop offset="1" stop-color="#174a48" stop-opacity="0"/></radialGradient></defs><path d="M31.2 588.6 A7 7 0 0 1 38.2 581.6 L122.9 581.6 A6 6 0 0 0 128.9 575.6 L128.9 561.6 A7 7 0 0 1 135.9 554.6 L311.2 554.6 A7 7 0 0 1 318.2 561.6 L318.2 575.6 A6 6 0 0 0 324.2 581.6 L384.3 581.6 A6 6 0 0 0 390.3 575.6 L390.3 561.6 A7 7 0 0 1 397.3 554.6 L431.1 554.6 A7 7 0 0 1 438.1 561.6 L438.1 575.6 A6 6 0 0 0 444.1 581.6 L492.8 581.6 A6 6 0 0 0 498.8 575.6 L498.8 561.6 A7 7 0 0 1 505.8 554.6 L727.5999999999999 554.6 A7 7 0 0 1 734.5999999999999 561.6 L734.5999999999999 575.6 A6 6 0 0 0 740.5999999999999 581.6 L832.5 581.6 A6 6 0 0 0 838.5 575.6 L838.5 561.6 A7 7 0 0 1 845.5 554.6 L893.9 554.6 A7 7 0 0 1 900.9 561.6 L900.9 575.6 A6 6 0 0 0 906.9 581.6 L908.8 581.6 A7 7 0 0 1 915.8 588.6 L915.8 652.2 A7 7 0 0 1 908.8 659.2 L38.2 659.2 A7 7 0 0 1 31.2 652.2 Z" fill="none" stroke="rgba(255,255,255,.55)" stroke-width="4.5"/><path d="M31.2 588.6 A7 7 0 0 1 38.2 581.6 L122.9 581.6 A6 6 0 0 0 128.9 575.6 L128.9 561.6 A7 7 0 0 1 135.9 554.6 L311.2 554.6 A7 7 0 0 1 318.2 561.6 L318.2 575.6 A6 6 0 0 0 324.2 581.6 L384.3 581.6 A6 6 0 0 0 390.3 575.6 L390.3 561.6 A7 7 0 0 1 397.3 554.6 L431.1 554.6 A7 7 0 0 1 438.1 561.6 L438.1 575.6 A6 6 0 0 0 444.1 581.6 L492.8 581.6 A6 6 0 0 0 498.8 575.6 L498.8 561.6 A7 7 0 0 1 505.8 554.6 L727.5999999999999 554.6 A7 7 0 0 1 734.5999999999999 561.6 L734.5999999999999 575.6 A6 6 0 0 0 740.5999999999999 581.6 L832.5 581.6 A6 6 0 0 0 838.5 575.6 L838.5 561.6 A7 7 0 0 1 845.5 554.6 L893.9 554.6 A7 7 0 0 1 900.9 561.6 L900.9 575.6 A6 6 0 0 0 906.9 581.6 L908.8 581.6 A7 7 0 0 1 915.8 588.6 L915.8 652.2 A7 7 0 0 1 908.8 659.2 L38.2 659.2 A7 7 0 0 1 31.2 652.2 Z" fill="#102b2b"/><g clip-path="url(#seqclip)"><rect x="30" y="580" width="890" height="82" fill="url(#spk)"/><rect x="854" y="580" width="64" height="82" fill="url(#rgt)"/><rect x="0" y="553" width="950" height="12" fill="rgba(255,255,255,.09)"/><rect x="0" y="565" width="950" height="16" fill="#0f2525"/></g><path d="M31.2 588.6 A7 7 0 0 1 38.2 581.6 L122.9 581.6 A6 6 0 0 0 128.9 575.6 L128.9 561.6 A7 7 0 0 1 135.9 554.6 L311.2 554.6 A7 7 0 0 1 318.2 561.6 L318.2 575.6 A6 6 0 0 0 324.2 581.6 L384.3 581.6 A6 6 0 0 0 390.3 575.6 L390.3 561.6 A7 7 0 0 1 397.3 554.6 L431.1 554.6 A7 7 0 0 1 438.1 561.6 L438.1 575.6 A6 6 0 0 0 444.1 581.6 L492.8 581.6 A6 6 0 0 0 498.8 575.6 L498.8 561.6 A7 7 0 0 1 505.8 554.6 L727.5999999999999 554.6 A7 7 0 0 1 734.5999999999999 561.6 L734.5999999999999 575.6 A6 6 0 0 0 740.5999999999999 581.6 L832.5 581.6 A6 6 0 0 0 838.5 575.6 L838.5 561.6 A7 7 0 0 1 845.5 554.6 L893.9 554.6 A7 7 0 0 1 900.9 561.6 L900.9 575.6 A6 6 0 0 0 906.9 581.6 L908.8 581.6 A7 7 0 0 1 915.8 588.6 L915.8 652.2 A7 7 0 0 1 908.8 659.2 L38.2 659.2 A7 7 0 0 1 31.2 652.2 Z" fill="none" stroke="#050505" stroke-width="2.5"/><rect x="91.4" y="599" width="762.60" height="49.5" fill="#0c2222"/><rect x="91.4" y="599" width="762.60" height="6" fill="#0b1e1e"/><rect x="91.4" y="642" width="762.60" height="6.5" fill="#0b1e1e"/><rect x="114.73" y="599" width="1" height="49.5" fill="#1d3c37"/><rect x="138.56" y="599" width="1" height="49.5" fill="#2a7d52"/><rect x="162.39" y="599" width="1" height="49.5" fill="#1d3c37"/><rect x="186.23" y="599" width="1" height="49.5" fill="#2a7d52"/><rect x="210.06" y="599" width="1" height="49.5" fill="#1d3c37"/><rect x="233.89" y="599" width="1" height="49.5" fill="#2a7d52"/><rect x="257.72" y="599" width="1" height="49.5" fill="#1d3c37"/><rect x="305.38" y="599" width="1" height="49.5" fill="#1d3c37"/><rect x="329.21" y="599" width="1" height="49.5" fill="#2a7d52"/><rect x="353.04" y="599" width="1" height="49.5" fill="#1d3c37"/><rect x="376.88" y="599" width="1" height="49.5" fill="#2a7d52"/><rect x="400.71" y="599" width="1" height="49.5" fill="#1d3c37"/><rect x="424.54" y="599" width="1" height="49.5" fill="#2a7d52"/><rect x="448.37" y="599" width="1" height="49.5" fill="#1d3c37"/><rect x="496.03" y="599" width="1" height="49.5" fill="#1d3c37"/><rect x="519.86" y="599" width="1" height="49.5" fill="#2a7d52"/><rect x="543.69" y="599" width="1" height="49.5" fill="#1d3c37"/><rect x="567.52" y="599" width="1" height="49.5" fill="#2a7d52"/><rect x="591.36" y="599" width="1" height="49.5" fill="#1d3c37"/><rect x="615.19" y="599" width="1" height="49.5" fill="#2a7d52"/><rect x="639.02" y="599" width="1" height="49.5" fill="#1d3c37"/><rect x="686.68" y="599" width="1" height="49.5" fill="#1d3c37"/><rect x="710.51" y="599" width="1" height="49.5" fill="#2a7d52"/><rect x="734.34" y="599" width="1" height="49.5" fill="#1d3c37"/><rect x="758.17" y="599" width="1" height="49.5" fill="#2a7d52"/><rect x="782.01" y="599" width="1" height="49.5" fill="#1d3c37"/><rect x="805.84" y="599" width="1" height="49.5" fill="#2a7d52"/><rect x="829.67" y="599" width="1" height="49.5" fill="#1d3c37"/><rect x="91.40" y="605" width="95.33" height="37" fill="#2f6b3c"/><rect x="91.60" y="605" width="2" height="37" fill="#5ef07a"/><rect x="186.23" y="599" width="1" height="49.5" fill="#2a7d52"/><path d="M186.23 631.6 V642 H175.93 Z" fill="#5ef07a"/><rect x="282.05" y="605" width="95.33" height="37" fill="#2f6b3c"/><rect x="282.25" y="605" width="2" height="37" fill="#5ef07a"/><rect x="376.88" y="599" width="1" height="49.5" fill="#2a7d52"/><path d="M376.88 631.6 V642 H366.57 Z" fill="#5ef07a"/><rect x="377.38" y="605" width="47.66" height="37" fill="#2f6b3c"/><rect x="377.57" y="605" width="2" height="37" fill="#5ef07a"/><rect x="424.54" y="599" width="1" height="49.5" fill="#2a7d52"/><path d="M424.54 631.6 V642 H414.24 Z" fill="#5ef07a"/><rect x="472.70" y="605" width="95.33" height="37" fill="#2f6b3c"/><rect x="472.90" y="605" width="2" height="37" fill="#5ef07a"/><rect x="567.53" y="599" width="1" height="49.5" fill="#2a7d52"/><path d="M567.53 631.6 V642 H557.23 Z" fill="#5ef07a"/><rect x="663.35" y="605" width="95.33" height="37" fill="#2f6b3c"/><rect x="663.55" y="605" width="2" height="37" fill="#5ef07a"/><rect x="758.18" y="599" width="1" height="49.5" fill="#2a7d52"/><path d="M758.18 631.6 V642 H747.88 Z" fill="#5ef07a"/><rect x="91.4" y="598.1" width="762.60" height="1.2" fill="#46b865"/><rect x="91.4" y="648.1" width="762.60" height="1.2" fill="#46b865"/><rect x="90.80" y="593.8" width="1.3" height="58" fill="#5ef07a"/><rect x="281.45" y="593.8" width="1.3" height="58" fill="#5ef07a"/><rect x="472.10" y="593.8" width="1.3" height="58" fill="#5ef07a"/><rect x="662.75" y="593.8" width="1.3" height="58" fill="#5ef07a"/><rect x="853.40" y="593.8" width="1.3" height="58" fill="#5ef07a"/><rect x="535.9" y="595" width="1.5" height="53.5" fill="#f4e23c"/><path d="M531.8 593.2 H541.6 L536.7 599.6 Z" fill="#f4e23c"/><circle cx="61.5" cy="622" r="13.3" fill="#0c2423"/><path d="M54 619.3 H56.8 L61 615.8 V628.4 L56.8 624.9 H54 Z" fill="#5ef07a"/><path d="M63.3 619.2 Q65 622.1 63.3 625" stroke="#5ef07a" stroke-width="1.4" fill="none"/><path d="M65.8 617.2 Q68.7 622.1 65.8 627" stroke="#5ef07a" stroke-width="1.4" fill="none"/></svg>
<div class="t" style="left:96.60px;top:607.72px;font-size:14.4px;color:#5ef27a;font-weight:bold;letter-spacing:-.2px">GMaj9</div>
<div class="t" style="left:287.25px;top:607.72px;font-size:14.4px;color:#5ef27a;font-weight:bold;letter-spacing:-.2px">DMaj9</div>
<div class="t" style="left:382.57px;top:607.72px;font-size:14.4px;color:#5ef27a;font-weight:bold;letter-spacing:-.2px">FMaj9</div>
<div class="t" style="left:477.90px;top:607.72px;font-size:14.4px;color:#5ef27a;font-weight:bold;letter-spacing:-.2px">Am7</div>
<div class="t" style="left:668.55px;top:607.72px;font-size:14.4px;color:#5ef27a;font-weight:bold;letter-spacing:-.2px">Bbdim7</div>
<div class="t" style="left:96.40px;top:584.63px;font-size:10.5px;color:#5ef27a;font-weight:bold;">1</div>
<div class="t" style="left:287.05px;top:584.63px;font-size:10.5px;color:#5ef27a;font-weight:bold;">2</div>
<div class="t" style="left:477.70px;top:584.63px;font-size:10.5px;color:#5ef27a;font-weight:bold;">3</div>
<div class="t" style="left:668.35px;top:584.63px;font-size:10.5px;color:#5ef27a;font-weight:bold;">4</div>
<div class="t" style="left:864.70px;top:618.24px;font-size:11.2px;color:#5ef27a;font-weight:normal;letter-spacing:-.1px">CLEAR</div>
<div class="t g" style="left:43.10px;top:559.74px;font-size:13.5px;color:#585858;font-weight:normal;">Snap/Length:</div>
<div class="t" style="left:148.30px;top:559.32px;font-size:14.4px;color:#2d6a2a;font-weight:bold;letter-spacing:-.3px">Bar</div>
<div class="t" style="left:182.00px;top:559.32px;font-size:14.4px;color:#2d6a2a;font-weight:bold;letter-spacing:-.3px">1/2</div>
<div class="t" style="left:214.00px;top:559.32px;font-size:14.4px;color:#2d6a2a;font-weight:bold;letter-spacing:-.3px">1/4</div>
<div class="t" style="left:245.70px;top:559.32px;font-size:14.4px;color:#66f650;font-weight:bold;letter-spacing:-.3px">1/8</div>
<div class="t" style="left:273.80px;top:559.32px;font-size:14.4px;color:#2d6a2a;font-weight:bold;letter-spacing:-.3px">1/16</div>
<div class="t g" style="left:347.70px;top:559.74px;font-size:13.5px;color:#585858;font-weight:normal;">Bars:</div>
<div class="t" style="left:264.50px;top:559.09px;width:300px;text-align:center;font-size:14.6px;color:#66f650;font-weight:bold;">16</div>
<div class="t g" style="left:458.40px;top:559.74px;font-size:13.5px;color:#585858;font-weight:normal;">View:</div>
<div class="a" style="left:506.80px;top:558.7px;width:49.2px;height:17.5px;border-radius:9px;background:#66f650;box-shadow:inset 0 0 0 .8px #4cc840"></div>
<div class="t" style="left:381.40px;top:559.92px;width:300px;text-align:center;font-size:14.4px;color:#1a2a1a;font-weight:bold;letter-spacing:-.2px">1-4</div>
<div class="a" style="left:563.85px;top:558.7px;width:49.2px;height:17.5px;border-radius:9px;background:#2e6626"></div>
<div class="t" style="left:438.45px;top:559.92px;width:300px;text-align:center;font-size:14.4px;color:#66f650;font-weight:bold;letter-spacing:-.2px">5-8</div>
<div class="a" style="left:620.90px;top:558.7px;width:49.2px;height:17.5px;border-radius:9px;background:#2e6626"></div>
<div class="t" style="left:495.50px;top:559.92px;width:300px;text-align:center;font-size:14.4px;color:#66f650;font-weight:bold;letter-spacing:-.2px">9-12</div>
<div class="a" style="left:677.95px;top:558.7px;width:49.2px;height:17.5px;border-radius:9px;background:#2e6626"></div>
<div class="t" style="left:552.55px;top:559.92px;width:300px;text-align:center;font-size:14.4px;color:#66f650;font-weight:bold;letter-spacing:-.2px">13-16</div>
<div class="t g" style="left:782.70px;top:559.74px;font-size:13.5px;color:#585858;font-weight:normal;">Shuffle:</div>
<div class="t" style="left:719.10px;top:559.09px;width:300px;text-align:center;font-size:14.6px;color:#66f650;font-weight:bold;">63%</div>
<div class="a" style="left:0;top:675.5px;width:950px;height:2.5px;background:linear-gradient(#c8c8c8,#9a9a9a)"></div>
</body></html>
